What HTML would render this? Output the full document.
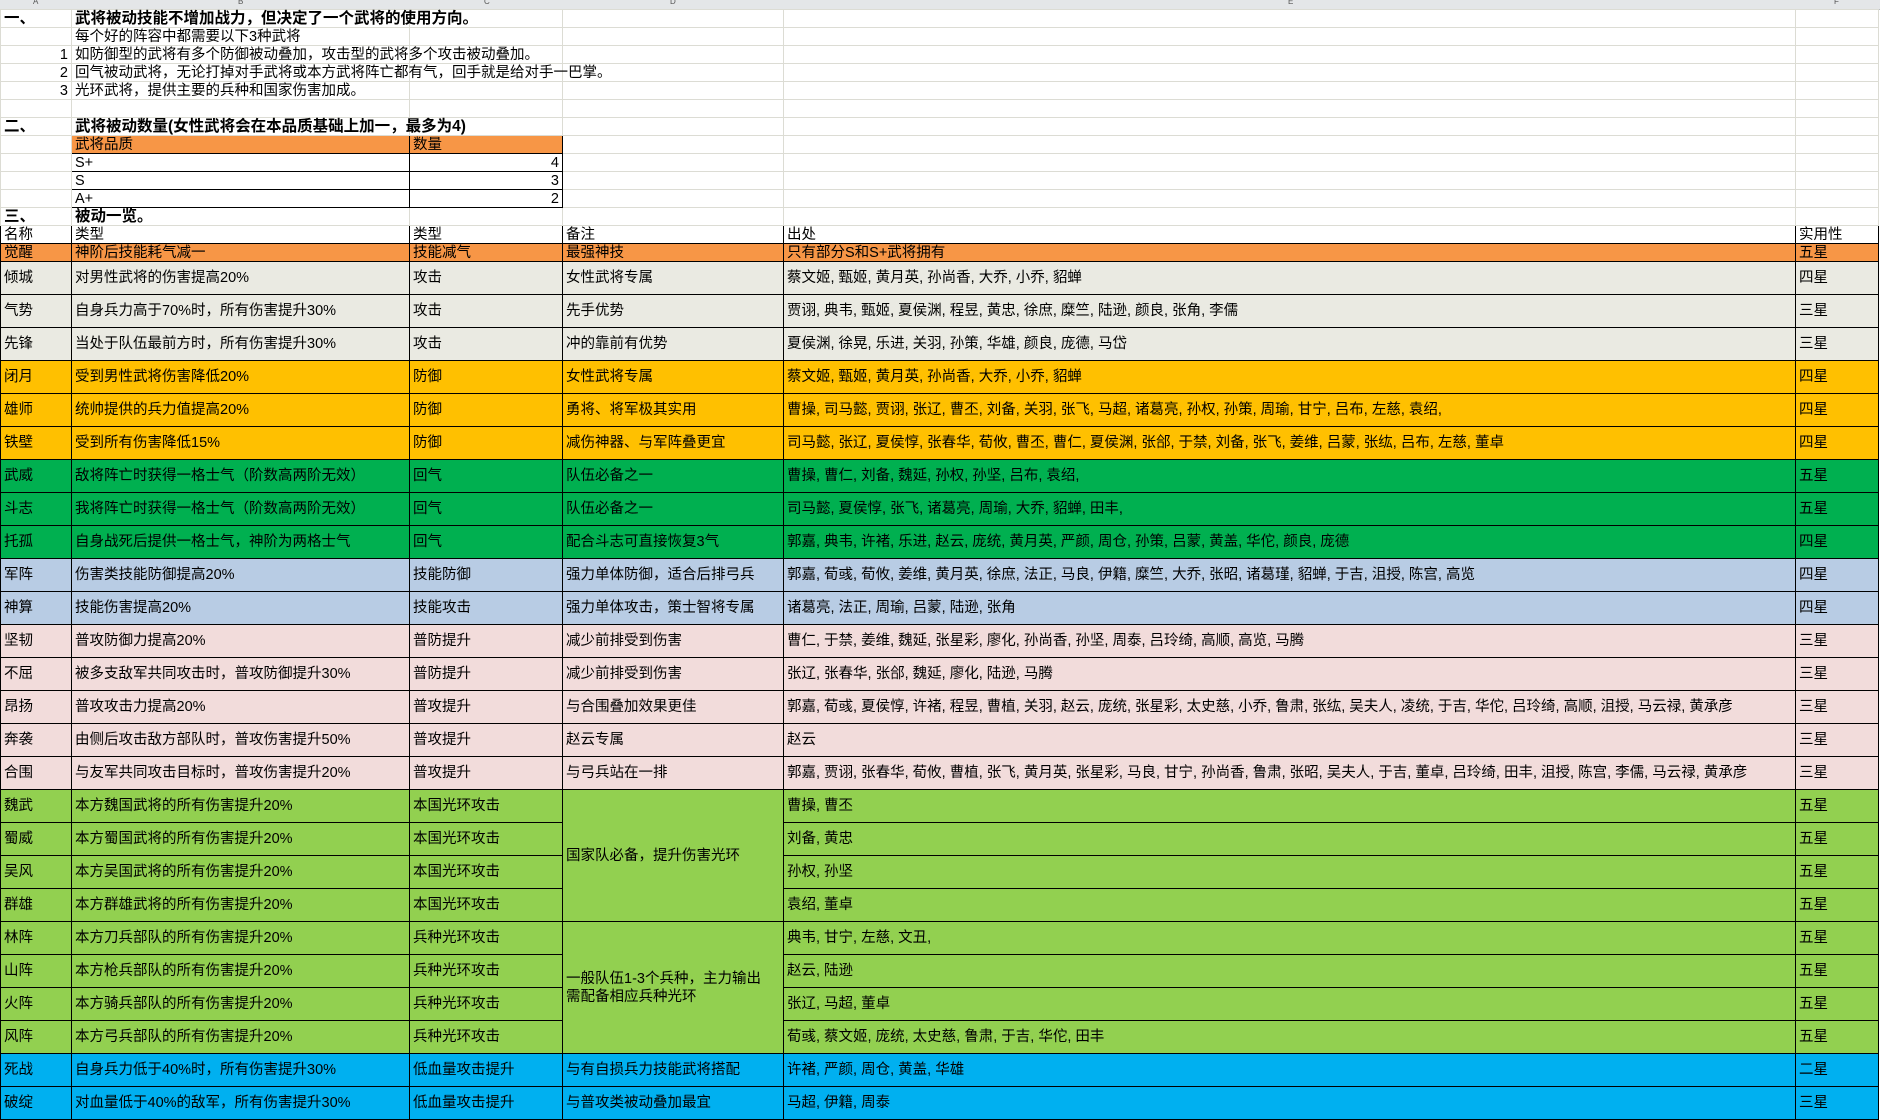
<!DOCTYPE html>
<html><head><meta charset="utf-8"><style>
body{margin:0;width:1880px;height:1120px;overflow:hidden;background:#fff;font-family:"Liberation Sans","Noto Sans CJK SC",sans-serif;color:#000}
.hb{position:absolute;left:0;top:0;width:1880px;height:9px;background:#e4e6e8;border-bottom:1px solid #b8bcc0;font-size:8px;line-height:8px;color:#555}
.hb span{position:absolute;top:-2px}
table{position:absolute;left:0;top:9px;border-collapse:collapse;table-layout:fixed;width:1878px}
td{padding:0 0 0 3px;white-space:nowrap;overflow:visible;font-size:14.5px;border:1px solid #dcdcd4;vertical-align:bottom;line-height:16px}
tr.t td{height:17px}
.b{font-weight:bold;font-size:15.5px}
.r{text-align:right;padding-right:3px}
.k{border:1px solid #000}
.m td{border:1px solid #000;height:32px;vertical-align:middle}
.h td{border:1px solid #000;height:17px}
.o td{background:#f79646}
.g td{background:#eaeae2}
.y td{background:#ffc000}
.gr td{background:#00b050}
.bl td{background:#b8cce4}
.p td{background:#f2dcdb}
.lg td{background:#92d050}
.c td{background:#00b0f0}
td.sp{vertical-align:middle;white-space:normal;line-height:18px}
</style></head><body>
<div class="hb"><span style="left:33px">A</span><span style="left:238px">B</span><span style="left:484px">C</span><span style="left:670px">D</span><span style="left:1288px">E</span><span style="left:1834px">F</span></div>
<table>
<colgroup><col style="width:71px"><col style="width:338px"><col style="width:153px"><col style="width:221px"><col style="width:1012px"><col style="width:83px"></colgroup>
<tr class="t"><td class="b">一、</td><td class="b">武将被动技能不增加战力，但决定了一个武将的使用方向。</td><td></td><td></td><td></td><td></td></tr>
<tr class="t"><td></td><td>每个好的阵容中都需要以下3种武将</td><td></td><td></td><td></td><td></td></tr>
<tr class="t"><td class="r">1</td><td>如防御型的武将有多个防御被动叠加，攻击型的武将多个攻击被动叠加。</td><td></td><td></td><td></td><td></td></tr>
<tr class="t"><td class="r">2</td><td>回气被动武将，无论打掉对手武将或本方武将阵亡都有气，回手就是给对手一巴掌。</td><td></td><td></td><td></td><td></td></tr>
<tr class="t"><td class="r">3</td><td>光环武将，提供主要的兵种和国家伤害加成。</td><td></td><td></td><td></td><td></td></tr>
<tr class="t"><td></td><td></td><td></td><td></td><td></td><td></td></tr>
<tr class="t"><td class="b">二、</td><td class="b">武将被动数量(女性武将会在本品质基础上加一，最多为4)</td><td></td><td></td><td></td><td></td></tr>
<tr class="t"><td></td><td class="k" style="background:#f79646">武将品质</td><td class="k" style="background:#f79646">数量</td><td></td><td></td><td></td></tr>
<tr class="t"><td></td><td class="k">S+</td><td class="k r">4</td><td></td><td></td><td></td></tr>
<tr class="t"><td></td><td class="k">S</td><td class="k r">3</td><td></td><td></td><td></td></tr>
<tr class="t"><td></td><td class="k">A+</td><td class="k r">2</td><td></td><td></td><td></td></tr>
<tr class="t"><td class="b">三、</td><td class="b">被动一览。</td><td></td><td></td><td></td><td></td></tr>
<tr class="h"><td>名称</td><td>类型</td><td>类型</td><td>备注</td><td>出处</td><td>实用性</td></tr>
<tr class="h o"><td>觉醒</td><td>神阶后技能耗气减一</td><td>技能减气</td><td>最强神技</td><td>只有部分S和S+武将拥有</td><td>五星</td></tr>
<tr class="m g"><td>倾城</td><td>对男性武将的伤害提高20%</td><td>攻击</td><td>女性武将专属</td><td>蔡文姬, 甄姬, 黄月英, 孙尚香, 大乔, 小乔, 貂蝉</td><td>四星</td></tr>
<tr class="m g"><td>气势</td><td>自身兵力高于70%时，所有伤害提升30%</td><td>攻击</td><td>先手优势</td><td>贾诩, 典韦, 甄姬, 夏侯渊, 程昱, 黄忠, 徐庶, 糜竺, 陆逊, 颜良, 张角, 李儒</td><td>三星</td></tr>
<tr class="m g"><td>先锋</td><td>当处于队伍最前方时，所有伤害提升30%</td><td>攻击</td><td>冲的靠前有优势</td><td>夏侯渊, 徐晃, 乐进, 关羽, 孙策, 华雄, 颜良, 庞德, 马岱</td><td>三星</td></tr>
<tr class="m y"><td>闭月</td><td>受到男性武将伤害降低20%</td><td>防御</td><td>女性武将专属</td><td>蔡文姬, 甄姬, 黄月英, 孙尚香, 大乔, 小乔, 貂蝉</td><td>四星</td></tr>
<tr class="m y"><td>雄师</td><td>统帅提供的兵力值提高20%</td><td>防御</td><td>勇将、将军极其实用</td><td>曹操, 司马懿, 贾诩, 张辽, 曹丕, 刘备, 关羽, 张飞, 马超, 诸葛亮, 孙权, 孙策, 周瑜, 甘宁, 吕布, 左慈, 袁绍,</td><td>四星</td></tr>
<tr class="m y"><td>铁壁</td><td>受到所有伤害降低15%</td><td>防御</td><td>减伤神器、与军阵叠更宜</td><td>司马懿, 张辽, 夏侯惇, 张春华, 荀攸, 曹丕, 曹仁, 夏侯渊, 张郃, 于禁, 刘备, 张飞, 姜维, 吕蒙, 张纮, 吕布, 左慈, 董卓</td><td>四星</td></tr>
<tr class="m gr"><td>武威</td><td>敌将阵亡时获得一格士气（阶数高两阶无效）</td><td>回气</td><td>队伍必备之一</td><td>曹操, 曹仁, 刘备, 魏延, 孙权, 孙坚, 吕布, 袁绍,</td><td>五星</td></tr>
<tr class="m gr"><td>斗志</td><td>我将阵亡时获得一格士气（阶数高两阶无效）</td><td>回气</td><td>队伍必备之一</td><td>司马懿, 夏侯惇, 张飞, 诸葛亮, 周瑜, 大乔, 貂蝉, 田丰,</td><td>五星</td></tr>
<tr class="m gr"><td>托孤</td><td>自身战死后提供一格士气，神阶为两格士气</td><td>回气</td><td>配合斗志可直接恢复3气</td><td>郭嘉, 典韦, 许褚, 乐进, 赵云, 庞统, 黄月英, 严颜, 周仓, 孙策, 吕蒙, 黄盖, 华佗, 颜良, 庞德</td><td>四星</td></tr>
<tr class="m bl"><td>军阵</td><td>伤害类技能防御提高20%</td><td>技能防御</td><td>强力单体防御，适合后排弓兵</td><td>郭嘉, 荀彧, 荀攸, 姜维, 黄月英, 徐庶, 法正, 马良, 伊籍, 糜竺, 大乔, 张昭, 诸葛瑾, 貂蝉, 于吉, 沮授, 陈宫, 高览</td><td>四星</td></tr>
<tr class="m bl"><td>神算</td><td>技能伤害提高20%</td><td>技能攻击</td><td>强力单体攻击，策士智将专属</td><td>诸葛亮, 法正, 周瑜, 吕蒙, 陆逊, 张角</td><td>四星</td></tr>
<tr class="m p"><td>坚韧</td><td>普攻防御力提高20%</td><td>普防提升</td><td>减少前排受到伤害</td><td>曹仁, 于禁, 姜维, 魏延, 张星彩, 廖化, 孙尚香, 孙坚, 周泰, 吕玲绮, 高顺, 高览, 马腾</td><td>三星</td></tr>
<tr class="m p"><td>不屈</td><td>被多支敌军共同攻击时，普攻防御提升30%</td><td>普防提升</td><td>减少前排受到伤害</td><td>张辽, 张春华, 张郃, 魏延, 廖化, 陆逊, 马腾</td><td>三星</td></tr>
<tr class="m p"><td>昂扬</td><td>普攻攻击力提高20%</td><td>普攻提升</td><td>与合围叠加效果更佳</td><td>郭嘉, 荀彧, 夏侯惇, 许褚, 程昱, 曹植, 关羽, 赵云, 庞统, 张星彩, 太史慈, 小乔, 鲁肃, 张纮, 吴夫人, 凌统, 于吉, 华佗, 吕玲绮, 高顺, 沮授, 马云禄, 黄承彦</td><td>三星</td></tr>
<tr class="m p"><td>奔袭</td><td>由侧后攻击敌方部队时，普攻伤害提升50%</td><td>普攻提升</td><td>赵云专属</td><td>赵云</td><td>三星</td></tr>
<tr class="m p"><td>合围</td><td>与友军共同攻击目标时，普攻伤害提升20%</td><td>普攻提升</td><td>与弓兵站在一排</td><td>郭嘉, 贾诩, 张春华, 荀攸, 曹植, 张飞, 黄月英, 张星彩, 马良, 甘宁, 孙尚香, 鲁肃, 张昭, 吴夫人, 于吉, 董卓, 吕玲绮, 田丰, 沮授, 陈宫, 李儒, 马云禄, 黄承彦</td><td>三星</td></tr>
<tr class="m lg"><td>魏武</td><td>本方魏国武将的所有伤害提升20%</td><td>本国光环攻击</td><td rowspan="4" class="sp">国家队必备，提升伤害光环</td><td>曹操, 曹丕</td><td>五星</td></tr>
<tr class="m lg"><td>蜀威</td><td>本方蜀国武将的所有伤害提升20%</td><td>本国光环攻击</td><td>刘备, 黄忠</td><td>五星</td></tr>
<tr class="m lg"><td>吴风</td><td>本方吴国武将的所有伤害提升20%</td><td>本国光环攻击</td><td>孙权, 孙坚</td><td>五星</td></tr>
<tr class="m lg"><td>群雄</td><td>本方群雄武将的所有伤害提升20%</td><td>本国光环攻击</td><td>袁绍, 董卓</td><td>五星</td></tr>
<tr class="m lg"><td>林阵</td><td>本方刀兵部队的所有伤害提升20%</td><td>兵种光环攻击</td><td rowspan="4" class="sp">一般队伍1-3个兵种，主力输出<br>需配备相应兵种光环</td><td>典韦, 甘宁, 左慈, 文丑,</td><td>五星</td></tr>
<tr class="m lg"><td>山阵</td><td>本方枪兵部队的所有伤害提升20%</td><td>兵种光环攻击</td><td>赵云, 陆逊</td><td>五星</td></tr>
<tr class="m lg"><td>火阵</td><td>本方骑兵部队的所有伤害提升20%</td><td>兵种光环攻击</td><td>张辽, 马超, 董卓</td><td>五星</td></tr>
<tr class="m lg"><td>风阵</td><td>本方弓兵部队的所有伤害提升20%</td><td>兵种光环攻击</td><td>荀彧, 蔡文姬, 庞统, 太史慈, 鲁肃, 于吉, 华佗, 田丰</td><td>五星</td></tr>
<tr class="m c"><td>死战</td><td>自身兵力低于40%时，所有伤害提升30%</td><td>低血量攻击提升</td><td>与有自损兵力技能武将搭配</td><td>许褚, 严颜, 周仓, 黄盖, 华雄</td><td>二星</td></tr>
<tr class="m c"><td>破绽</td><td>对血量低于40%的敌军，所有伤害提升30%</td><td>低血量攻击提升</td><td>与普攻类被动叠加最宜</td><td>马超, 伊籍, 周泰</td><td>三星</td></tr>
</table>
</body></html>
